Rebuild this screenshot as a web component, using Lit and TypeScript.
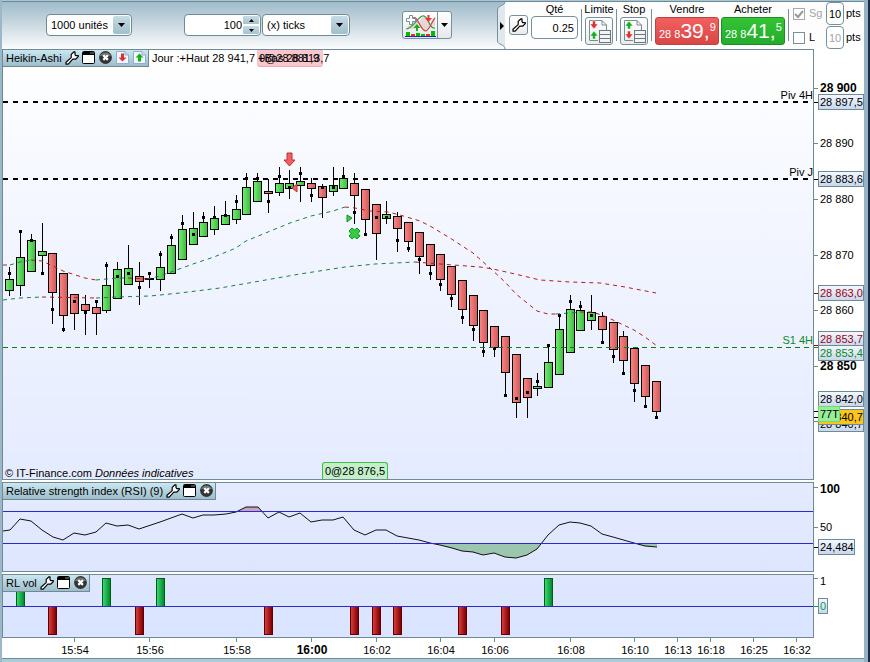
import { LitElement, html, css, svg } from "lit";
import { customElement } from "lit/decorators.js";

/* centre x, body top, body bottom, wick top, wick bottom, last-price dot y, rising */
type Candle = [number, number, number, number, number, number, 0 | 1];

const CANDLES: Candle[] = [
  [9, 279, 291, 267, 296, 273, 1], [20, 257, 286, 231, 296, 231, 1], [31, 240, 272, 234, 272, 240, 1],
  [42, 251, 256, 223, 274, 273, 1], [52, 253, 293, 253, 324, 309, 0], [63, 273, 316, 273, 332, 329, 0],
  [74, 294, 314, 294, 330, 301, 0], [85, 304, 311, 295, 335, 312, 0], [96, 307, 314, 301, 335, 301, 0],
  [106, 285, 311, 262, 313, 265, 1], [117, 269, 299, 262, 299, 276, 1], [128, 268, 285, 245, 285, 273, 1],
  [139, 276, 282, 262, 305, 287, 0], [149, 278, 280, 272, 288, 273, 1], [160, 267, 280, 251, 291, 254, 1],
  [171, 245, 274, 234, 274, 237, 1], [182, 229, 260, 215, 260, 223, 1], [193, 228, 245, 212, 245, 234, 1],
  [203, 222, 237, 212, 237, 217, 1], [214, 218, 230, 206, 235, 217, 1], [225, 215, 225, 201, 225, 215, 1],
  [236, 209, 220, 195, 224, 201, 1], [246, 187, 215, 173, 215, 178, 1], [257, 181, 202, 173, 202, 178, 1],
  [268, 191, 194, 179, 213, 201, 0], [279, 183, 193, 167, 196, 176, 1], [289, 183, 189, 170, 199, 187, 1],
  [300, 181, 186, 167, 202, 173, 1], [311, 183, 189, 178, 202, 195, 0], [322, 186, 198, 184, 218, 187, 0],
  [333, 185, 192, 167, 196, 187, 1], [343, 178, 189, 167, 189, 176, 1], [354, 183, 196, 173, 224, 212, 0],
  [365, 189, 220, 189, 234, 234, 0], [376, 204, 234, 204, 260, 217, 0], [386, 214, 219, 201, 224, 217, 1],
  [397, 216, 229, 212, 252, 240, 0], [408, 222, 242, 222, 252, 248, 0], [419, 232, 257, 232, 274, 259, 0],
  [430, 244, 266, 244, 280, 273, 0], [440, 254, 280, 254, 291, 284, 0], [451, 266, 295, 266, 307, 298, 0],
  [462, 280, 310, 280, 324, 317, 0], [473, 295, 326, 295, 341, 329, 0], [483, 310, 343, 310, 357, 351, 0],
  [494, 326, 348, 326, 357, 348, 0], [505, 336, 373, 336, 396, 395, 0], [516, 354, 403, 354, 418, 398, 0],
  [527, 378, 398, 378, 418, 392, 0], [537, 386, 389, 373, 396, 381, 1], [548, 362, 388, 345, 388, 345, 1],
  [559, 329, 375, 315, 375, 315, 1], [570, 309, 353, 295, 353, 301, 1], [580, 310, 331, 301, 331, 306, 1],
  [591, 312, 321, 295, 330, 315, 1], [602, 316, 330, 312, 343, 342, 0], [613, 322, 350, 322, 363, 356, 0],
  [623, 336, 361, 331, 374, 373, 0], [634, 348, 384, 348, 402, 390, 0], [645, 365, 397, 365, 407, 406, 0],
  [656, 381, 412, 381, 418, 417, 0],
];

/* Moving averages, split where the slope changes sign. */
const AVERAGES: { up: boolean; points: string }[] = [
  { up: false, points: "3,265 10,265" },
  { up: true, points: "10,265 20,262 31,260" },
  { up: false, points: "31,260 42,261 55,267 63,271 85,278 96,280" },
  { up: true, points: "96,280 117,278 128,278" },
  { up: false, points: "128,278 147,279" },
  { up: true, points: "147,279 160,276 182,268 193,264 214,257 236,248 246,241 268,232 290,223 311,216 333,211 345,207" },
  { up: false, points: "345,207 355,208 370,211 388,212 400,215 420,221 430,226 450,238 473,253 490,268 505,282 516,294 537,311 548,314 556,314" },
  { up: true, points: "556,314 570,313 580,312" },
  { up: false, points: "580,312 591,312 602,315 613,320 634,330 645,337 657,346" },
  { up: true, points: "3,300 20,298 42,297" },
  { up: false, points: "42,297 96,298" },
  { up: true, points: "96,298 117,297 150,296 180,293 220,288 260,281 300,274 345,267 375,264 415,262" },
  { up: false, points: "415,262 440,264 480,267 493,269 515,274 540,280 570,282 600,283 625,287 656,293" },
];

const RSI =
  "3,531 10,530 20,519 31,521 42,530 53,537 63,540 74,533 85,535 96,532 106,523 117,526 128,525 139,529 160,522 171,518 182,514 193,518 203,515 214,515 226,514 236,512 246,507 258,507 268,518 279,512 289,517 300,513 311,522 322,520 333,520 343,517 354,530 365,535 376,530 386,530 397,536 408,538 419,540 430,543 440,545 452,548 462,551 473,552 483,555 494,553 505,557 516,558 527,555 537,549 548,535 559,525 570,522 580,523 591,526 602,534 613,537 634,543 645,546 657,547";

const VOL_UP = [20, 106, 160, 548];
const VOL_DOWN = [52, 139, 268, 354, 376, 397, 462, 505];

const TIMES: [number, string][] = [
  [74, "15:54"], [149, "15:56"], [236, "15:58"], [311, "16:00"], [376, "16:02"], [440, "16:04"], [494, "16:06"],
  [570, "16:08"], [634, "16:10"], [677, "16:13"], [710, "16:18"], [753, "16:25"], [796, "16:32"],
];

const gradients = svg`
  <defs>
    <linearGradient id="rise"><stop offset="0" stop-color="#70ec70"/><stop offset="1" stop-color="#42bc42"/></linearGradient>
    <linearGradient id="fall"><stop offset="0" stop-color="#fb8282"/><stop offset="1" stop-color="#cf5c5c"/></linearGradient>
    <linearGradient id="volUp"><stop offset="0" stop-color="#3cd673"/><stop offset="1" stop-color="#008c2c"/></linearGradient>
    <linearGradient id="volDown"><stop offset="0" stop-color="#d83c3c"/><stop offset="1" stop-color="#800000"/></linearGradient>
    <linearGradient id="tag" x2="0" y2="1"><stop offset="0" stop-color="#f2f7ff"/><stop offset="1" stop-color="#c9d8ec"/></linearGradient>
  </defs>`;

const wrench = html`<svg width="14" height="14" viewBox="0 0 14 14" aria-hidden="true">
  <path d="M1 11.2 L6.2 6.6 V3.4 L9 .8 H10 V3.6 L10.8 4.6 H13.3 V5.6 L10.6 8.2 H7.8 L3.2 13.2 H1 Z" fill="#fff" stroke="#000" stroke-width="1.2" stroke-linejoin="round"/>
</svg>`;

const windowIcon = html`<svg width="14" height="14" viewBox="0 0 14 14" aria-hidden="true">
  <rect x=".5" y=".5" width="12" height="12" rx="1" fill="#fff" stroke="#000"/>
  <rect x="1" y="1" width="11" height="3" fill="#000"/><rect x="8" y="1" width="4" height="2" fill="#444"/>
</svg>`;

const closeIcon = html`<svg width="14" height="14" viewBox="0 0 14 14" aria-hidden="true">
  <circle cx="6.5" cy="6.5" r="6.4" fill="#333"/><path d="M1 5a6 6 0 0 1 11 0Z" fill="#777"/>
  <path d="M4.3 4.3l4.6 4.6M8.9 4.3L4.3 8.9" stroke="#fff" stroke-width="2.2"/>
</svg>`;

const arrowDoc = (up: boolean) => html`<svg width="14" height="14" viewBox="0 0 14 14" aria-hidden="true">
  <path d="M.5 .5H9L12.500 4V12.500H.5Z" fill="#f1f7ff" stroke="#8fb0cc"/><path d="M9 .5V4H12.500" fill="#cfe0ee" stroke="#8fb0cc"/>
  ${up
    ? svg`<path d="M6.500 2.500L10.500 6.500H8V10.500H5V6.500H2.500Z" fill="#18b018"/>`
    : svg`<path d="M6.500 10.500L10.500 6.500H8V2.500H5V6.500H2.500Z" fill="#dc2f2f"/>`}
</svg>`;

const orderIcon = (upFirst: boolean) => {
  const down = "M-1.500 0H1.500V3H4L0 8L-4 3H-1.500Z";
  const up = "M0 0L4 5H1.500V8H-1.500V5H-4Z";
  return html`<svg width="24" height="24" viewBox="0 0 24 24" aria-hidden="true">
    <path d="M2.500 21V1.500H15L19.500 6V11M15 1.500V6H19.500M2.500 21.500H11" fill="none" stroke="#7e8a90"/>
    <path d="${upFirst ? up : down}" transform="translate(7 2)" fill="${upFirst ? "#12b022" : "#e03030"}" stroke="#fff" stroke-width=".5"/>
    <path d="${upFirst ? down : up}" transform="translate(7 12)" fill="${upFirst ? "#e03030" : "#12b022"}" stroke="#fff" stroke-width=".5"/>
    <g fill="#f2f5f6" stroke="#6b777d"><rect x="12.500" y="11.500" width="11" height="4"/><rect x="12.500" y="15.500" width="11" height="4"/><rect x="12.500" y="19.500" width="11" height="4"/></g>
  </svg>`;
};

const indicatorIcon = html`<svg width="31" height="23" viewBox="0 0 31 23" aria-hidden="true">
  <path d="M9 3C14 6 15 16 20 17C24 16 26 6 30 4L30 12C24 12 24 2 20 2C15 3 13 14 8 15L2 14Z" fill="#e4d0cc" opacity=".8"/>
  <path d="M1 15C9 15 13 1 19 2C24 4 24 15 30 14" fill="none" stroke="#35a14c" stroke-width="1.200"/>
  <path d="M8 4C13 1 15 17 21 17C25 15 27 7 30 4" fill="none" stroke="#d04646" stroke-width="1.200"/>
  <path d="M4.500 1.500H7.500V4.500H10.500V7.500H7.500V10.500H4.500V7.500H1.500V4.500H4.500Z" fill="#fff" stroke="#78909c"/>
  <path d="M22.500 1H24.500V4H27L23.500 8L20 4H22.500Z" fill="#e33"/>
  <path d="M12 10L15.500 14H13V17H11V14H8.500Z" fill="#12b022"/>
  <rect x="1" y="18" width="4" height="4" fill="#0b0"/><rect x="6" y="20" width="4" height="2" fill="#d33"/>
  <rect x="11" y="19" width="4" height="3" fill="#0b0"/><rect x="16" y="20" width="4" height="2" fill="#0b0"/>
  <rect x="21" y="20" width="4" height="2" fill="#d33"/><rect x="26" y="17" width="4" height="5" fill="#0b0"/>
  <rect x="0" y="22" width="31" height="1" fill="#2222c8"/>
</svg>`;

@customElement("app-root")
export class AppRoot extends LitElement {
  static styles = css`
    :host {
      display: block;
      box-sizing: border-box;
      min-height: 100vh;
      font: 11px/13px "Liberation Sans", Arial, sans-serif;
      color: #000;
      background: #fff;
      border-left: 2px solid #9ab8c7;
      border-right: 2px solid #1e2a4c;
    }
    * { box-sizing: border-box; }
    svg { display: block; }
    svg text { font-size: 11px; }
    svg text.bold { font-size: 12px; font-weight: bold; }
    button, input, select { font: inherit; color: inherit; margin: 0; }
    button { padding: 0; cursor: pointer; }
    .frame { border-right: 4px solid #95b4c1; }
    .edge { height: 2px; background: #6f8995; border-top: 1px solid #a9c6d3; }
    .toolbar { display: flex; height: 47px; background: linear-gradient(#9fbccb, #c3d4dd 40%, #fbfcfd); }
    .settings { display: flex; flex: 1; align-items: center; padding: 0 0 1px 44px; gap: 52px; }
    .pair { display: flex; gap: 1px; }
    .combo { position: relative; display: block; height: 22px; }
    .combo select, .number input {
      appearance: none; width: 100%; height: 22px; padding: 0 4px;
      background: #fff; border: 1px solid #6f8995; border-radius: 4px;
    }
    .units { width: 86px; }
    .ticks { width: 88px; }
    .drop {
      position: absolute; top: 2px; right: 2px; width: 17px; height: 18px; display: grid; place-items: center;
      background: linear-gradient(#c6dbe4, #9fbfcb); border-radius: 2px; pointer-events: none;
    }
    .number { position: relative; width: 77px; height: 22px; }
    .number input { padding-right: 18px; text-align: right; appearance: textfield; }
    .number input::-webkit-inner-spin-button { appearance: none; margin: 0; }
    .spin { position: absolute; top: 2px; right: 2px; width: 16px; display: grid; gap: 2px; }
    .spin button { display: grid; place-items: center; height: 8px; border: 0; border-radius: 1px; background: linear-gradient(#c6dbe4, #a5c3cf); }
    .indicator { display: flex; height: 28px; border: 1px solid #78909c; border-radius: 3px; background: linear-gradient(#fff, #e6e8ea); overflow: hidden; }
    .indicator button { display: grid; place-items: center; border: 0; background: none; width: 34px; }
    .indicator .more { width: 14px; border-left: 1px solid #78909c; }
    .order { display: flex; background: linear-gradient(90deg, transparent 8px, #fdfdfd 8px); padding-right: 2px; }
    .fold { border: 0; background: none; width: 11px; height: 47px; }
    .square { display: grid; place-items: center; border: 1px solid #78909c; border-radius: 3px; background: linear-gradient(#fff, #e9ebec); }
    .config { width: 19px; height: 20px; margin: 13px 3px 0 1px; }
    .field { display: flex; flex-direction: column; align-items: center; gap: 1px; padding-top: 1px; }
    .quantity { gap: 0; width: 47px; }
    .quantity input { width: 47px; height: 23px; padding: 0 3px; text-align: right; border: 1px solid #78909c; border-radius: 4px; background: #fff; }
    .quantity label, .field .caption { white-space: nowrap; }
    .narrow { width: 28px; }
    .narrow button { width: 28px; height: 28px; }
    .bar { width: 1px; height: 32px; margin: 7px 3px 0; background: #78909c; }
    .prices { display: flex; gap: 2px; }
    .price { width: 64px; height: 28px; padding: 0 3px 1px 3px; border-radius: 3px; color: #fff; display: flex; align-items: baseline; white-space: nowrap; }
    .sell { background: linear-gradient(#f26060, #d84646); border: 1px solid #b84444; }
    .buy { background: linear-gradient(#34c434, #24ac2c); border: 1px solid #1c8c26; }
    .big { font-size: 21px; line-height: 26px; }
    .tip { align-self: flex-start; line-height: 18px; }
    .stops { display: grid; gap: 1px; padding-left: 1px; }
    .stop { display: grid; grid-template-columns: 14px 15px 18px 16px; align-items: center; column-gap: 2px; height: 23px; }
    .stop input[type="checkbox"] { appearance: none; width: 12px; height: 12px; border: 1px solid #78909c; background: #fff; }
    .stop input.off { border-color: #aaa; background: #fff; }
    .tick { position: relative; display: flex; }
    .tick svg { position: absolute; left: 1px; top: 1px; pointer-events: none; }
    .stop input.pts { width: 18px; height: 23px; padding: 0; text-align: center; border: 1px solid #78909c; border-radius: 4px; background: #fff; }
    .grey { color: #a4a4a4; }
    .charts { display: grid; grid-template-columns: minmax(0, 1fr) 50px; row-gap: 2px; }
    .plot { position: relative; border: 1px solid #6f8995; overflow: hidden; }
    .main { background: linear-gradient(#fff, #f4f7ff 35%, #e5ebff); }
    .rsi { background: linear-gradient(#e4ebff, #dee6ff); }
    .vol { background: linear-gradient(#dfe7ff, #dae4ff); }
    .title {
      position: absolute; top: 0; left: 0; height: 17px; display: flex; align-items: center; padding: 0 1px 0 3px; gap: 3px;
      background: linear-gradient(#cbe8f1, #9dbdca); border: 1px solid #6f8995; border-width: 0 1px 1px 0;
    }
    .title h2 { margin: 0; font: inherit; white-space: nowrap; }
    .title button { border: 0; background: none; width: 14px; height: 14px; }
    .info { position: absolute; top: 2px; left: 149px; margin: 0; white-space: pre; }
    .hint { position: absolute; padding: 2px 2px 0; white-space: nowrap; }
    .high { left: 254px; top: 0; width: 66px; height: 17px; background: #f9c6ce; border-bottom: 1px solid #f0a8b4; border-radius: 0 0 3px 3px; }
    .low { left: 319px; bottom: 0; height: 17px; width: 66px; background: #c3efc9; border: 1px solid #3cc04a; border-bottom: 0; border-radius: 3px 3px 0 0; }
    .credit { position: absolute; left: 2px; bottom: 0; margin: 0; line-height: 11px; white-space: nowrap; }
    .times { height: 20px; }
    .foot { height: 4px; border-top: 1px solid #6f8995; background: #acccd8; }
  `;

  private candle([x, top, bottom, high, low, dot, up]: Candle) {
    return svg`
      <rect x=${x} y=${high} width="1" height=${low - high}/>
      <rect x=${x - 4} y=${top} width="9" height=${bottom - top}/>
      <rect x=${x - 3} y=${top + 1} width="7" height=${Math.max(0, bottom - top - 2)} fill=${up ? "url(#rise)" : "url(#fall)"}/>
      <rect x=${x - 1} y=${dot - 1} width="3" height="3"/>`;
  }

  private level(y: number, name: string, labelY: number, strong: boolean) {
    return svg`
      <line x1="0" x2="100%" y1=${y} y2=${y} stroke=${strong ? "#000" : "#0a7a1a"} stroke-width=${strong ? 2 : 1}
        stroke-dasharray=${strong ? "5 5" : "5 4"} shape-rendering="crispEdges"/>
      <text x="100%" y=${labelY} text-anchor="end" fill=${strong ? "#000" : "#0a8a1a"}>${name}</text>`;
  }

  private mark(y: number, color = "#6f8995") {
    return svg`<rect x="0" y=${y} width="4" height="1" fill=${color}/>`;
  }

  private scale(y: number, text: string, bold = false) {
    return svg`${this.mark(y)}<text x="6" y=${y + 4} class=${bold ? "bold" : ""}>${text}</text>`;
  }

  private tag(y: number, text: string, color = "#000", width = 46, fill = "url(#tag)", edge = "#6f8995") {
    return svg`
      <rect x="4" y=${y - 8} width=${width} height="16" fill=${edge}/>
      <rect x="5" y=${y - 7} width=${width - 2} height="14" fill=${fill}/>
      <text x="6" y=${y + 4} fill=${color}>${text}</text>`;
  }

  private tools(extra = false) {
    return html`
      <button aria-label="Configurer">${wrench}</button>
      <button aria-label="Agrandir">${windowIcon}</button>
      <button aria-label="Fermer">${closeIcon}</button>
      ${extra
        ? html`<button aria-label="Descendre">${arrowDoc(false)}</button><button aria-label="Monter">${arrowDoc(true)}</button>`
        : ""}`;
  }

  private caret() {
    return html`<svg width="7" height="4" aria-hidden="true"><path d="M0 0H7L3.500 4Z"/></svg>`;
  }

  private toolbar() {
    return html`
      <header class="toolbar">
        <div class="settings">
          <label class="combo units">
            <select aria-label="Historique"><option>1000 unités</option></select>
            <span class="drop">${this.caret()}</span>
          </label>
          <div class="pair">
            <div class="number">
              <input type="number" value="100" aria-label="Nombre" />
              <div class="spin">
                <button aria-label="Plus"><svg width="5" height="3"><path d="M0 3H5L2.500 0Z"/></svg></button>
                <button aria-label="Moins"><svg width="5" height="3"><path d="M0 0H5L2.500 3Z"/></svg></button>
              </div>
            </div>
            <label class="combo ticks">
              <select aria-label="Unité de temps"><option>(x) ticks</option></select>
              <span class="drop">${this.caret()}</span>
            </label>
          </div>
          <div class="indicator">
            <button aria-label="Ajouter un indicateur">${indicatorIcon}</button>
            <button class="more" aria-label="Liste des indicateurs">${this.caret()}</button>
          </div>
        </div>
        <div class="order">
          <button class="fold" aria-label="Replier">
            <svg width="11" height="47" viewBox="0 0 11 47">
              <path d="M8 0C8 4 1 3 1 8V39C1 43 8 42 8 47H11V0Z" fill="#dfe8ed"/>
              <path d="M8 0H11V47H8Z" fill="#fdfdfd"/>
              <path d="M8 0C8 4 .5 3 .5 8V39C.5 43 8 42 8 47" fill="none" stroke="#78909c"/>
              <path d="M3 20L7 24L3 28Z"/>
            </svg>
          </button>
          <button class="square config" aria-label="Options">${wrench}</button>
          <div class="field quantity">
            <label for="qty">Qté</label><input id="qty" type="text" value="0.25" />
          </div>
          <div class="bar"></div>
          <div class="field narrow"><span class="caption">Limite</span><button class="square" aria-label="Ordre limite">${orderIcon(false)}</button></div>
          <div class="bar"></div>
          <div class="field narrow"><span class="caption">Stop</span><button class="square" aria-label="Ordre stop">${orderIcon(true)}</button></div>
          <div class="bar"></div>
          <div class="prices">
            <div class="field"><span class="caption">Vendre</span>
              <button class="price sell"><span>28 8</span><span class="big">39,</span><span class="tip">9</span></button></div>
            <div class="field"><span class="caption">Acheter</span>
              <button class="price buy"><span>28 8</span><span class="big">41,</span><span class="tip">5</span></button></div>
          </div>
          <div class="bar"></div>
          <div class="stops">
            <div class="stop">
              <span class="tick"><input id="sg" class="off" type="checkbox" checked disabled />
                <svg width="10" height="10" aria-hidden="true"><path d="M1 5L4 8L9 2" fill="none" stroke="#999" stroke-width="2"/></svg></span>
              <label for="sg" class="grey">Sg</label><input class="pts" value="10" aria-label="Points Sg" /><span>pts</span>
            </div>
            <div class="stop">
              <input id="lim" type="checkbox" /><label for="lim">L</label>
              <input class="pts grey" value="10" aria-label="Points L" /><span>pts</span>
            </div>
          </div>
        </div>
      </header>`;
  }

  private pricePlot() {
    return html`
      <section class="plot main">
        <svg width="100%" height="429">
          ${gradients}
          ${this.level(52, "Piv 4H", 49, true)}
          ${this.level(129, "Piv J", 126, true)}
          <g transform="translate(-3 -50)">
            <g shape-rendering="crispEdges">${CANDLES.map((c) => this.candle(c))}</g>
            ${AVERAGES.map((a) => svg`<polyline points=${a.points} fill="none" stroke=${a.up ? "#1c7c50" : "#b01c24"} stroke-dasharray="4 4"/>`)}
            <path d="M287 153H292V160H295L289.500 166L284 160H287Z" fill="#f06060" stroke="#c03030"/>
            <path d="M297 184V192L292 188Z" fill="#f06060" stroke="#c03030"/>
            <path d="M347 215L352 218L347 222Z" fill="#3cd048" stroke="#1a8c28"/>
            <path d="M352 228L354.500 230L357 228L360 231L358 233.500L360 236L357 239L354.500 237L352 239L349 236L351 233.500L349 231Z" fill="#34cc40" stroke="#149024" stroke-linejoin="round"/>
          </g>
          ${this.level(297, "S1 4H", 294, false)}
        </svg>
        <div class="title"><h2>Heikin-Ashi</h2>${this.tools(true)}</div>
        <div class="hint high">0@28 881,9</div>
        <p class="info">Jour :+Haut 28 941,7 +Bas 28 813,7</p>
        <p class="credit">© IT-Finance.com <em>Données indicatives</em></p>
        <div class="hint low">0@28 876,5</div>
      </section>
      <svg width="50" height="431" shape-rendering="crispEdges">
        ${gradients}
        ${this.scale(39, "28 900", true)} ${this.scale(94, "28 890")} ${this.scale(150, "28 880")}
        ${this.scale(206, "28 870")} ${this.scale(261, "28 860")} ${this.scale(317, "28 850", true)}
        ${this.mark(53, "#000")} ${this.mark(130, "#000")} ${this.mark(244, "#a00010")} ${this.mark(296, "#a00010")}
        ${this.mark(298, "#0a8a1a")} ${this.mark(362, "#000")} ${this.mark(368, "#000")} ${this.mark(372)}
        ${this.tag(53, "28 897,5")} ${this.tag(130, "28 883,6")} ${this.tag(244, "28 863,0", "#a00010")}
        ${this.tag(290, "28 853,7", "#a00010")} ${this.tag(304, "28 853,4", "#0a8a1a")}
        ${this.tag(350, "28 842,0")} ${this.tag(375, "28 840,7")} ${this.tag(368, "28 840,7", "#000", 46, "#fcc41c")}
        ${this.tag(365, "77T", "#000", 22, "#98ee98", "#70dc70")}
      </svg>`;
  }

  private rsiPlot() {
    return html`
      <section class="plot rsi">
        <svg width="100%" height="88">
          <g transform="translate(-3 -483)">
            <polygon points="238,511 246,507 258,507 262,511" fill="#c8a4b4"/>
            <polygon points="430,543 440,545 452,548 462,551 473,552 483,555 494,553 505,557 516,558 527,555 537,549 542,543" fill="#9cc6ae"/>
            <polygon points="634,543 645,546 657,547 657,543" fill="#9cc6ae"/>
            <polyline points=${RSI} fill="none" stroke="#111"/>
          </g>
          <rect y="28" width="100%" height="1" fill="#2a2ad0"/><rect y="60" width="100%" height="1" fill="#2a2ad0"/>
        </svg>
        <div class="title"><h2>Relative strength index (RSI) (9)</h2>${this.tools()}</div>
      </section>
      <svg width="50" height="90" shape-rendering="crispEdges">
        ${gradients} ${this.mark(5)}<text x="6" y="11" class="bold">100</text>
        ${this.scale(45, "50")} ${this.mark(65, "#000")} ${this.tag(65, "24,484", "#000", 37)}
      </svg>`;
  }

  private volumePlot() {
    return html`
      <section class="plot vol">
        <svg width="100%" height="62" shape-rendering="crispEdges">
          ${gradients}
          <g transform="translate(-3 -575)">
            ${VOL_UP.map((x) => svg`<rect x=${x - 4} y="578" width="9" height="28" fill="#005c14"/><rect x=${x - 3} y="579" width="7" height="27" fill="url(#volUp)"/>`)}
            ${VOL_DOWN.map((x) => svg`<rect x=${x - 4} y="607" width="9" height="28" fill="#5c0000"/><rect x=${x - 3} y="607" width="7" height="27" fill="url(#volDown)"/>`)}
          </g>
          <rect y="31" width="100%" height="1" fill="#2a2ad0"/>
        </svg>
        <div class="title"><h2>RL vol</h2>${this.tools()}</div>
      </section>
      <svg width="50" height="64" shape-rendering="crispEdges">
        ${gradients} ${this.mark(4)}<text x="6" y="11">1</text>
        ${this.mark(32, "#0a9a4a")} ${this.tag(32, "0", "#0a9a4a", 10)}
      </svg>`;
  }

  render() {
    return html`
      <div class="frame">
        <div class="edge"></div>
        ${this.toolbar()}
        <main class="charts">${this.pricePlot()} ${this.rsiPlot()} ${this.volumePlot()}</main>
        <svg class="times" width="100%" height="20">
          ${TIMES.map(([x, t]) => svg`<rect x=${x - 2} y="0" width="1" height="4" fill="#6f8995"/>
            <text x=${x - 1} y="16" text-anchor="middle" class=${t === "16:00" ? "bold" : ""}>${t}</text>`)}
        </svg>
        <div class="foot"></div>
      </div>`;
  }
}
